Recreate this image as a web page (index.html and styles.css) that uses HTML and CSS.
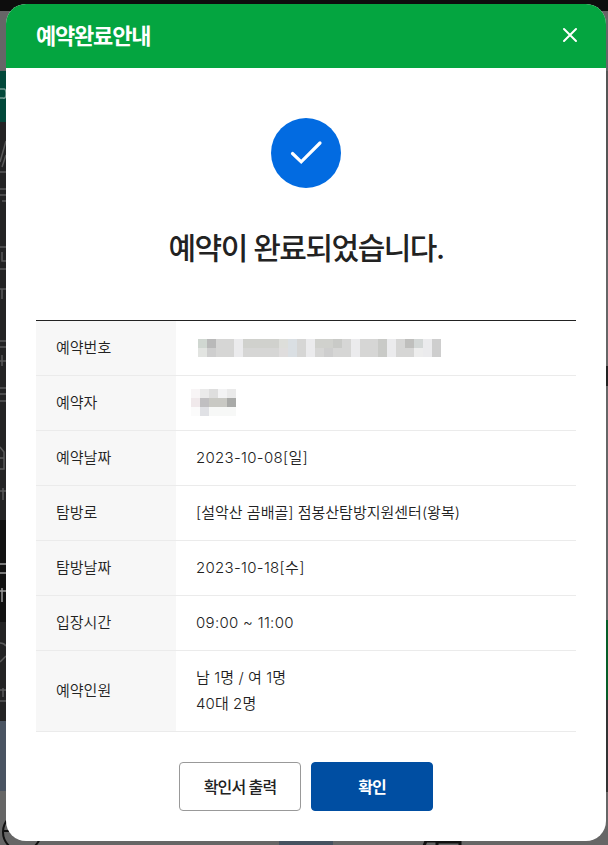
FILE: index.html
```html
<!DOCTYPE html>
<html lang="ko">

<head>
    <meta charset="UTF-8">
    <meta name="viewport" content="width=device-width, initial-scale=1.0">
    <title>예약완료안내</title>
    <link rel="stylesheet" href="styles.css">
</head>

<body>
    <!-- dimmed page behind the popup -->
    <svg class="page-behind" width="608" height="845" viewBox="0 0 608 845" aria-hidden="true">
        <rect width="608" height="845" fill="#232324"/>
        <rect width="608" height="11" fill="#0d0d0d"/>
        <rect y="11" width="608" height="60" fill="#666567"/>
        <rect y="71" width="608" height="51" fill="#02483a"/>
        <rect y="520" width="8" height="102" fill="#111"/>
        <rect y="721" width="8" height="70" fill="#4a5462"/>
        <rect y="791" width="608" height="54" fill="#666"/>
        <rect x="279" y="838" width="54" height="7" fill="#465260"/>
        <rect x="606" y="71" width="2" height="295" fill="#555"/>
        <rect x="606" y="240" width="2" height="126" fill="#666"/>
        <rect x="606" y="366" width="2" height="20" fill="#222"/>
        <rect x="606" y="386" width="2" height="234" fill="#666"/>
        <rect x="606" y="620" width="2" height="80" fill="#075c28"/>
        <rect x="606" y="700" width="2" height="92" fill="#333"/>
        <g fill="none" stroke="#5a5a5a" stroke-width="1.5">
            <path d="M0 89H4Q6 89 6 94T3 98H0" stroke="#739b91"/>
            <path d="M6 141L0 162M6 155L2 167M0 172H6M0 189H6M0 195H6M2 201H6M0 247H6M2 252V261H6M0 269H6M0 289H6M2 289V299M0 341H6M0 347H6M2 355V366M0 361H6M0 388H6M0 394H6M0 401H6"/>
            <path d="M0 447L4 452V469H0M0 458H4M0 491H6M3 488V500M0 643Q4 643 6 646M0 662L6 656M0 690H6M3 688V697M0 701H6"/>
            <path d="M0 564H6M0 573H6M0 591H6M2 588V602" stroke="#999"/>
        </g>
        <circle cx="22" cy="832" r="19" fill="none" stroke="#111" stroke-width="2"/>
        <path d="M3 831H12" stroke="#111" stroke-width="2"/>
        <path d="M424 846L426 841H437V846M438 842H460V846" fill="none" stroke="#111" stroke-width="3"/>
    </svg>

    <div class="popup">
        <div class="popup-header">
            <h1 class="popup-title">예약완료안내</h1>
            <button class="btn-close" type="button" aria-label="닫기">
                <svg width="16" height="16" viewBox="0 0 16 16">
                    <path d="M2 2L14 14M14 2L2 14" fill="none" stroke="#fff" stroke-width="2" stroke-linecap="round"/>
                </svg>
            </button>
        </div>

        <div class="popup-body">
            <div class="check">
                <svg width="70" height="70" viewBox="0 0 70 70">
                    <path d="M21.5 35.5L30.2 43.8L49 25" fill="none" stroke="#fff" stroke-width="3.2" stroke-linecap="round"/>
                </svg>
            </div>
            <h2 class="message">예약이 완료되었습니다.</h2>

            <table class="info">
                <tr>
                    <th>예약번호</th>
                    <td>
                        <svg class="mosaic mosaic-number" width="243" height="18" viewBox="0 0 27 2" shape-rendering="crispEdges">
                            <rect width="27" height="2" fill="#d6d6d5"/>
                            <path d="M0 0h1v1H0z" fill="#d0d7d1"/>
                            <path d="M0 1h1v1H0z" fill="#e2e4e1"/>
                            <path d="M1 0h1v1H1z" fill="#b9b9b9"/>
                            <path d="M1 1h1v1H1zM14 1h1v1h-1zM26 0h1v2h-1z" fill="#cecece"/>
                            <path d="M4 0h1v2H4zM12 0h1v2h-1zM17 0h1v2h-1zM21 0h1v2h-1zM25 0h1v2h-1z" fill="#ebebed"/>
                            <path d="M24 1h1v1h-1z" fill="#ededed"/>
                            <path d="M9 0h1v1H9z" fill="#dddeda"/>
                            <path d="M9 1h1v1H9z" fill="#dfdddd"/>
                            <path d="M10 0h1v2h-1z" fill="#dadfe3"/>
                            <path d="M5 0h4v1H5zM13 0h2v1h-2z" fill="#d0d1cd"/>
                            <path d="M15 0h1v1h-1zM20 0h1v2h-1z" fill="#c9cac7"/>
                            <path d="M23 0h1v1h-1z" fill="#bfbfbd"/>
                            <path d="M24 0h1v1h-1z" fill="#d3d7d6"/>
                        </svg>
                    </td>
                </tr>
                <tr>
                    <th>예약자</th>
                    <td>
                        <svg class="mosaic mosaic-name" width="45" height="27" viewBox="0 0 5 3" shape-rendering="crispEdges">
                            <path d="M0 0h1v1H0z" fill="#f8f5f6"/>
                            <path d="M1 0h1v1H1zM4 0h1v1H4z" fill="#eaeaea"/>
                            <path d="M2 0h1v1H2z" fill="#dedede"/>
                            <path d="M3 0h1v1H3z" fill="#f3f3f4"/>
                            <path d="M0 1h1v1H0z" fill="#f0e9eb"/>
                            <path d="M1 1h1v1H1z" fill="#c0bfc1"/>
                            <path d="M2 1h2v1H2z" fill="#c9c9c4"/>
                            <path d="M4 1h1v1H4z" fill="#a9aaa8"/>
                            <path d="M0 2h1v1H0z" fill="#fbfbfb"/>
                            <path d="M1 2h1v1H1z" fill="#e0e1e5"/>
                            <path d="M2 2h3v1H2z" fill="#f7f8f7"/>
                        </svg>
                    </td>
                </tr>
                <tr>
                    <th>예약날짜</th>
                    <td class="num">2023-10-08[일]</td>
                </tr>
                <tr>
                    <th>탐방로</th>
                    <td>[설악산 곰배골] 점봉산탐방지원센터(왕복)</td>
                </tr>
                <tr>
                    <th>탐방날짜</th>
                    <td class="num">2023-10-18[수]</td>
                </tr>
                <tr>
                    <th>입장시간</th>
                    <td class="num">09:00 ~ 11:00</td>
                </tr>
                <tr>
                    <th>예약인원</th>
                    <td class="people">남 1명 / 여 1명<br>40대 2명</td>
                </tr>
            </table>

            <div class="buttons">
                <button class="btn" type="button">확인서 출력</button>
                <button class="btn btn-confirm" type="button">확인</button>
            </div>
        </div>
    </div>
</body>

</html>
```
FILE: styles.css
```css
* {
    box-sizing: border-box;
}

body {
    margin: 0;
    height: 845px;
    padding: 4px 2px 4px 6px;
    overflow: hidden;
    font-family: Inter, "Noto Sans CJK KR", sans-serif;
    color: #222;
}

.page-behind {
    position: absolute;
    top: 0;
    left: 0;
}

.popup {
    position: relative;
    width: 600px;
    height: 837px;
    background-color: #fff;
    border-radius: 20px;
    overflow: hidden;
}

.popup-header {
    display: flex;
    align-items: center;
    justify-content: space-between;
    height: 64px;
    padding: 0 28px 0 30px;
    background-color: #04a540;
    color: #fff;
}

.popup-title {
    margin: 0;
    font-size: 22px;
    font-weight: 700;
    line-height: 30px;
    letter-spacing: -1.2px;
}

.btn-close {
    display: flex;
    padding: 0;
    margin-bottom: 2px;
    border: none;
    background: none;
}

.popup-body {
    padding: 50px 30px 30px;
}

.check {
    width: 70px;
    height: 70px;
    margin: 0 auto;
    border-radius: 50%;
    background-color: #026be1;
}

.message {
    margin: 38px 0 50px;
    font-size: 30px;
    font-weight: 500;
    line-height: 44px;
    letter-spacing: -1.5px;
    text-align: center;
}

.info {
    width: 100%;
    border-top: 1px solid #222;
    border-collapse: separate;
    border-spacing: 0;
    font-size: 15px;
    line-height: 26px;
}

.info th,
.info td {
    padding: 14px 20px;
    border-bottom: 1px solid #ebebeb;
    font-weight: 350;
    text-align: left;
}

.info th {
    width: 140px;
    background-color: #f7f7f7;
}

.info .num {
    letter-spacing: 0.3px;
}

.info .people {
    letter-spacing: 0.1px;
}

.mosaic {
    display: block;
}

.mosaic-number {
    margin: 4px 0 4px 2px;
}

.mosaic-name {
    margin: -1px 0 0 -5px;
}

.buttons {
    display: flex;
    justify-content: center;
    gap: 10px;
    margin-top: 30px;
}

.btn {
    width: 122px;
    height: 49px;
    padding: 0 0 1px;
    border: 1px solid #999;
    border-radius: 4px;
    background-color: #fff;
    color: #222;
    font-family: inherit;
    font-size: 16px;
    font-weight: 500;
    letter-spacing: -0.9px;
}

.btn-confirm {
    border-color: #004ea2;
    background-color: #004ea2;
    color: #fff;
    font-weight: 700;
}
```
